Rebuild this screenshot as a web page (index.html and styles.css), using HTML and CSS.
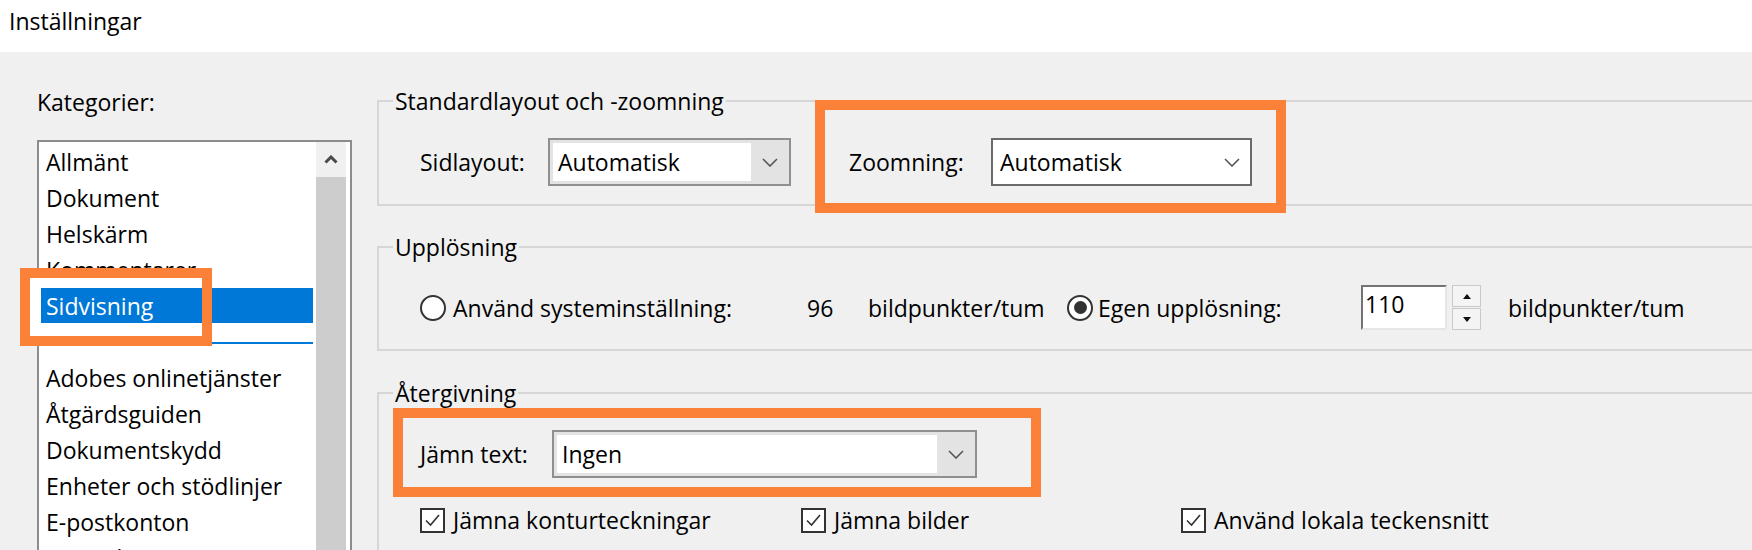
FILE: index.html
```html
<!DOCTYPE html>
<html lang="sv">
<head>
<meta charset="utf-8">
<title>Inställningar</title>
<link rel="stylesheet" href="styles.css">
</head>
<body>
<div class="titlebar">Inställningar</div>
<div class="main">
  <div class="cats">
    <div class="cats-label">Kategorier:</div>
    <div class="listwrap">
      <div class="list">
        <ul class="items">
          <li>Allmänt</li>
          <li>Dokument</li>
          <li>Helskärm</li>
          <li>Kommentarer</li>
          <li class="sel">Sidvisning</li>
          <li class="sep"></li>
          <li>Adobes onlinetjänster</li>
          <li>Åtgärdsguiden</li>
          <li>Dokumentskydd</li>
          <li>Enheter och stödlinjer</li>
          <li>E-postkonton</li>
          <li>Formulär</li>
        </ul>
        <div class="vscroll">
          <div class="vs-up"><svg class="vs-chev" viewBox="0 0 14 9"><path d="M1.5 7.5 L7 2 L12.5 7.5"/></svg></div>
          <div class="vs-thumb"></div>
        </div>
      </div>
      <div class="annot"></div>
    </div>
  </div>
  <div class="panels">
    <fieldset class="group g1">
      <legend>Standardlayout och -zoomning</legend>
      <div class="row r1">
        <span class="lbl lw-sid">Sidlayout:</span>
        <div class="combo combo-btn cw-sid">
          <span class="combo-field">Automatisk</span>
          <span class="combo-arrow"><svg class="chev" viewBox="0 0 16 9"><path d="M1 1 L8 8 L15 1"/></svg></span>
        </div>
        <div class="hl hl-zoom">
          <span class="lbl lw-zoom">Zoomning:</span>
          <div class="combo combo-plain cw-zoom">
            <span>Automatisk</span>
            <svg class="chev" viewBox="0 0 16 9"><path d="M1 1 L8 8 L15 1"/></svg>
          </div>
        </div>
      </div>
    </fieldset>

    <fieldset class="group g2">
      <legend>Upplösning</legend>
      <div class="row r2">
        <span class="radio"></span>
        <span class="lbl lw-sys">Använd systeminställning:</span>
        <span class="lbl lw-96">96</span>
        <span class="lbl lw-unit">bildpunkter/tum</span>
        <span class="radio on"></span>
        <span class="lbl lw-egen">Egen upplösning:</span>
        <span class="spin-input">110</span>
        <span class="spin-btns">
          <span class="spin-btn"><svg class="tri" viewBox="0 0 8 5"><path d="M0 5 L4 0 L8 5 Z"/></svg></span>
          <span class="spin-btn"><svg class="tri" viewBox="0 0 8 5"><path d="M0 0 L8 0 L4 5 Z"/></svg></span>
        </span>
        <span class="lbl unit2">bildpunkter/tum</span>
      </div>
    </fieldset>

    <fieldset class="group g3">
      <legend>Återgivning</legend>
      <div class="hl hl-jamn">
        <span class="lbl lw-jamn">Jämn text:</span>
        <div class="combo combo-btn cw-jamn">
          <span class="combo-field">Ingen</span>
          <span class="combo-arrow"><svg class="chev" viewBox="0 0 16 9"><path d="M1 1 L8 8 L15 1"/></svg></span>
        </div>
      </div>
      <div class="row r3">
        <span class="chk cw-a"><span class="chk-box"><svg viewBox="0 0 21 21"><path d="M4 10.5 L8.5 15 L17 5"/></svg></span>Jämna konturteckningar</span>
        <span class="chk cw-b"><span class="chk-box"><svg viewBox="0 0 21 21"><path d="M4 10.5 L8.5 15 L17 5"/></svg></span>Jämna bilder</span>
        <span class="chk"><span class="chk-box"><svg viewBox="0 0 21 21"><path d="M4 10.5 L8.5 15 L17 5"/></svg></span>Använd lokala teckensnitt</span>
      </div>
    </fieldset>
  </div>
</div>
</body>
</html>
```

FILE: styles.css
```css
* { box-sizing: border-box; }
html, body { margin: 0; padding: 0; }
body {
  width: 1752px;
  height: 550px;
  overflow: hidden;
  background: #f0f0f0;
  color: #000;
  font-family: "Open Sans", "Noto Sans", "Liberation Sans", sans-serif;
  font-size: 23px;
}

.titlebar {
  height: 52px;
  background: #fff;
  padding: 7px 0 0 9px;
  line-height: 28px;
}

.main { display: flex; }

/* categories column */
.cats { width: 377px; flex: none; padding: 36px 0 0 37px; }
.cats-label { line-height: 28px; }
.listwrap { position: relative; width: 315px; margin-top: 24px; }
.list {
  display: flex;
  height: 440px;
  border: 2px solid #8c8c8c;
  background: #fff;
  overflow: hidden;
}
.items { flex: 1; list-style: none; margin: 0; padding: 2px 3px 0 2px; }
.items li { height: 36px; line-height: 36px; padding-left: 5px; white-space: nowrap; }
.items li.sel { position: relative; z-index: 2; height: 35px; margin-bottom: 1px; background: #0078d7; color: #fff; }
.items li.sep { height: 20px; margin-bottom: 16px; border-bottom: 2px solid #0078d7; }

.vscroll { width: 30px; margin-right: 4px; display: flex; flex-direction: column; }
.vs-up { height: 35px; background: #f0f0f0; display: flex; align-items: center; justify-content: center; }
.vs-chev { width: 14px; height: 9px; fill: none; stroke: #4a4a4a; stroke-width: 3; }
.vs-thumb { flex: 1; background: #cdcdcd; }

.annot { position: absolute; left: -17px; top: 128px; width: 192px; height: 78px; }
.annot::before { content: ""; position: absolute; inset: 10px; background: #fff; z-index: 1; }
.annot::after { content: ""; position: absolute; inset: 0; border: 10px solid #fb8038; z-index: 3; }

/* right panels */
.panels { flex: 1; margin-right: -60px; padding-top: 35px; }
.group { margin: 0; padding: 0; min-width: 0; border: 2px solid #d6d6d6; }
.group legend { margin-left: 14px; padding: 0 2px; line-height: 28px; }
.g1 { margin-bottom: 27px; }
.g2 { margin-bottom: 28px; }
.g3 { padding-bottom: 120px; }

.row { display: flex; align-items: center; padding-left: 41px; }
.r1 { padding-top: 23px; padding-bottom: 18px; }
.r2 { height: 45px; box-sizing: content-box; padding-top: 24px; padding-bottom: 19px; }
.r3 { margin-top: 10px; height: 26px; }

.lbl { flex: none; white-space: nowrap; }
.lw-sid { width: 128px; }
.lw-zoom { width: 142px; }
.lw-jamn { width: 132px; }
.lw-sys { width: 354px; }
.lw-96 { width: 61px; }
.lw-unit { width: 199px; }
.lw-egen { width: 263px; }
.unit2 { margin-left: 27px; }

/* highlight boxes */
.hl { display: flex; align-items: center; border: 10px solid #fb8038; }
.hl-zoom {
  align-self: flex-start;
  height: 113px;
  margin: -38px 0 -27px 24px;
  padding: 28px 24px 17px 24px;
  align-items: flex-start;
}
.hl-zoom .lbl { line-height: 48px; }
.hl-jamn { width: 648px; margin: 1px 0 0 14px; padding: 12px 17px 9px 17px; }

/* combo boxes */
.combo { flex: none; height: 48px; display: flex; }
.combo-btn { border: 2px solid #8f8f8f; background: #e3e3e3; padding: 3px 0 3px 3px; }
.combo-field { flex: 1; background: #fff; padding-left: 5px; line-height: 38px; white-space: nowrap; }
.combo-arrow { width: 38px; display: flex; align-items: center; justify-content: center; }
.combo-plain {
  border: 2px solid #6b6b6b;
  background: #fff;
  padding: 0 10px 0 7px;
  align-items: center;
  justify-content: space-between;
}
.cw-sid { width: 243px; }
.cw-zoom { width: 261px; }
.cw-jamn { width: 425px; }
.chev { width: 16px; height: 9px; fill: none; stroke: #555; stroke-width: 1.6; }

/* radios */
.radio {
  flex: none;
  width: 26px;
  height: 26px;
  margin-right: 7px;
  border: 2px solid #333;
  border-radius: 50%;
  background: #fff;
  display: flex;
  align-items: center;
  justify-content: center;
}
.radio.on { margin-right: 5px; }
.radio.on::after { content: ""; width: 13px; height: 13px; border-radius: 50%; background: #333; }

/* spin box */
.spin-input {
  flex: none;
  width: 86px;
  height: 45px;
  padding: 1px 0 0 2px;
  line-height: 32px;
  background: #fff;
  border-style: solid;
  border-width: 2px;
  border-color: #747474 #e6e6e6 #e6e6e6 #747474;
}
.spin-btns { flex: none; width: 29px; height: 45px; margin-left: 5px; display: flex; flex-direction: column; gap: 1px; }
.spin-btn { flex: 1; border: 1px solid #cacaca; background: #f4f4f4; display: flex; align-items: center; justify-content: center; }
.tri { width: 8px; height: 5px; fill: #111; }

/* checkboxes */
.chk { flex: none; display: flex; align-items: center; white-space: nowrap; }
.cw-a { width: 381px; }
.cw-b { width: 380px; }
.chk-box { flex: none; width: 25px; height: 25px; margin-right: 8px; border: 2px solid #333; background: #fff; }
.chk-box svg { display: block; width: 21px; height: 21px; fill: none; stroke: #333; stroke-width: 1.6; }
```
